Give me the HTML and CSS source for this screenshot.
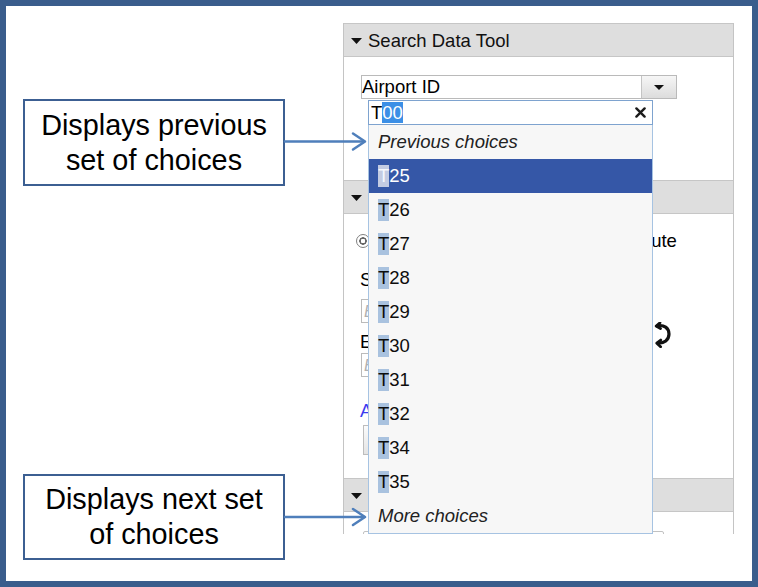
FILE: index.html
```html
<!DOCTYPE html>
<html lang="en">
<head>
<meta charset="utf-8">
<title>Search Data Tool – choices</title>
<link rel="stylesheet" href="styles.css">
</head>
<body>
<div class="frame">
  <section class="panel">
    <div class="hdr"><svg class="tri" width="11" height="6" viewBox="0 0 11 6"><polygon points="0,0 11,0 5.5,6" fill="#111"/></svg><span>Search Data Tool</span></div>
    <div class="body b1">
      <div class="select">
        <span class="select-val">Airport ID</span>
        <span class="select-btn"><svg width="10" height="5" viewBox="0 0 10 5"><polygon points="0,0 10,0 5,5" fill="#111"/></svg></span>
      </div>
    </div>
    <div class="hdr"><svg class="tri" width="11" height="6" viewBox="0 0 11 6"><polygon points="0,0 11,0 5.5,6" fill="#111"/></svg><span>Route Tool</span></div>
    <div class="body b2">
      <div class="radios">
        <span class="radio on"></span><span class="rtext">Airport</span>
        <span class="radio r2"></span><span class="rtext">Route</span>
      </div>
      <div class="od">
        <div class="od-fields">
          <div class="lbl">Start Airport</div>
          <div class="inp"><span class="ph">Enter airport</span></div>
          <div class="lbl lbl2">End Airport</div>
          <div class="inp inp2"><span class="ph">Enter airport</span></div>
        </div>
        <svg class="swap" width="20" height="26" viewBox="0 0 20 26">
          <path d="M4 4 C11 2.5 16 6 16 12 C16 18 11 21.5 5 21" fill="none" stroke="#111" stroke-width="3.2" stroke-linecap="round"/>
          <path d="M7 0.8 L3.2 4 L7.5 6.6" fill="none" stroke="#111" stroke-width="2.8" stroke-linecap="round" stroke-linejoin="round"/>
          <path d="M7.8 18 L3.8 21.2 L7.6 24.8" fill="none" stroke="#111" stroke-width="2.8" stroke-linecap="round" stroke-linejoin="round"/>
        </svg>
      </div>
      <div class="link">Advanced options</div>
      <div class="btn">Find Route</div>
    </div>
    <div class="hdr"><svg class="tri" width="11" height="6" viewBox="0 0 11 6"><polygon points="0,0 11,0 5.5,6" fill="#111"/></svg><span>Results</span></div>
    <div class="body b3">
      <div class="wide"></div>
    </div>
  </section>

  <div class="combo">
    <div class="combo-input">
      <span class="typed">T</span><span class="sel">00</span>
      <svg class="clear" width="11" height="11" viewBox="0 0 11 11"><path d="M1.4 1.4 L9.6 9.6 M9.6 1.4 L1.4 9.6" stroke="#1b1b1b" stroke-width="2.4" stroke-linecap="round"/></svg>
    </div>
    <ul class="list">
      <li class="row nav">Previous choices</li>
      <li class="row active"><span class="hl">T</span>25</li>
      <li class="row"><span class="hl">T</span>26</li>
      <li class="row"><span class="hl">T</span>27</li>
      <li class="row"><span class="hl">T</span>28</li>
      <li class="row"><span class="hl">T</span>29</li>
      <li class="row"><span class="hl">T</span>30</li>
      <li class="row"><span class="hl">T</span>31</li>
      <li class="row"><span class="hl">T</span>32</li>
      <li class="row"><span class="hl">T</span>34</li>
      <li class="row"><span class="hl">T</span>35</li>
      <li class="row nav">More choices</li>
    </ul>
  </div>

  <div class="callout c1">Displays previous<br>set of choices</div>
  <div class="callout c2">Displays next set<br>of choices</div>

  <svg class="arrows" width="746" height="575" viewBox="0 0 746 575">
    <g fill="none" stroke="#4f7fbb" stroke-width="2.5" stroke-linecap="round" stroke-linejoin="round">
      <line x1="279" y1="135.5" x2="358" y2="135.5"/>
      <polyline points="347,127.5 359,135.5 347,143.5"/>
      <line x1="279" y1="511" x2="358" y2="511"/>
      <polyline points="347,503 359,511 347,519"/>
    </g>
  </svg>
</div>
</body>
</html>
```

FILE: styles.css
```css
* {
  box-sizing: border-box;
  margin: 0;
  padding: 0;
}

html,
body {
  width: 758px;
  height: 587px;
  overflow: hidden;
  background: #fff;
}

body {
  font-family: "Liberation Sans", Arial, sans-serif;
}

.frame {
  position: relative;
  width: 758px;
  height: 587px;
  border: 6px solid #3a5d8c;
  background: #fff;
}

/* ---------- panel (background UI) ---------- */
.panel {
  margin: 17px 0 0 337px;
  width: 391px;
  height: 511px;
  overflow: hidden;
  border-left: 1px solid #c4c4c4;
  border-right: 1px solid #c4c4c4;
  font-size: 18.5px;
  color: #000;
}

.hdr {
  display: flex;
  align-items: center;
  gap: 6px;
  height: 34px;
  padding: 1px 0 0 7px;
  background: #dedede;
  border-top: 1px solid #c6c6c6;
  border-bottom: 1px solid #c6c6c6;
  color: #111;
  line-height: 31px;
}

.tri {
  flex: none;
}

.body {
  background: #fff;
}

.b1 {
  height: 123px;
  padding: 18px 0 0 17px;
}

.select {
  display: flex;
  width: 316px;
  height: 24px;
  border: 1px solid #bababa;
  background: #fff;
}

.select-val {
  flex: 1;
  line-height: 22px;
}

.select-btn {
  display: flex;
  align-items: center;
  justify-content: center;
  width: 35px;
  border-left: 1px solid #c4c4c4;
  background: linear-gradient(#f6f6f6, #dcdcdc);
}

.b2 {
  height: 264px;
  padding-top: 16px;
}

.radios {
  display: flex;
  align-items: center;
  height: 22px;
  padding-left: 12px;
}

.radio {
  flex: none;
  width: 14px;
  height: 14px;
  border: 1px solid #808080;
  border-radius: 50%;
  background: #fff;
}

.radio.on {
  background: radial-gradient(circle, #fff 0 2px, #666 2.5px 3.5px, #fff 4px);
}

.radio.r2 {
  margin-left: 181px;
}

.rtext {
  margin-left: 4px;
  line-height: 22px;
}

.od {
  display: flex;
  gap: 13px;
  margin-top: 17px;
  padding-left: 16px;
}

.od-fields {
  width: 280px;
}

.lbl {
  line-height: 22px;
}

.lbl2 {
  margin-top: 8px;
}

.inp {
  margin: 8px 0 0 1px;
  width: 270px;
  height: 24px;
  border: 1px solid #bbbbbb;
  padding-left: 2px;
  line-height: 22px;
}

.inp2 {
  margin-top: 0;
}

.ph {
  color: #b0b0b0;
  font-style: italic;
  font-size: 16px;
}

.swap {
  flex: none;
  margin-top: 53px;
}

.link {
  margin-top: 23px;
  padding-left: 16px;
  line-height: 22px;
  color: #3b3bef;
}

.btn {
  margin: 3px 0 0 19px;
  width: 150px;
  height: 30px;
  border: 1px solid #bdbdbd;
  background: linear-gradient(#fbfbfb, #e4e4e4);
  line-height: 28px;
  text-align: center;
}

.b3 {
  padding-top: 19px;
}

.wide {
  margin-left: 19px;
  width: 301px;
  height: 26px;
  border: 1px solid #c2c2c2;
  border-radius: 2px;
}

/* ---------- combo popup ---------- */
.combo {
  position: absolute;
  left: 362px;
  top: 94px;
  width: 285px;
  font-size: 18.5px;
  color: #000;
}

.combo-input {
  display: flex;
  align-items: center;
  height: 25px;
  padding: 0 6px 0 2px;
  border: 1px solid #7ea3cf;
  background: #fff;
  line-height: 21px;
}

.sel {
  background: #3b8fe6;
  color: #fff;
}

.clear {
  margin-left: auto;
}

.list {
  list-style: none;
  background: #f7f7f7;
  border: 1px solid #a6c3e2;
  border-top: 0;
}

.row {
  display: flex;
  align-items: center;
  height: 34px;
  padding-left: 9px;
  color: #0d0d0d;
}

.row .hl {
  background: #a9c2df;
}

.row.active {
  background: #3557a7;
  color: #fff;
}

.row.active .hl {
  background: #c3cbe2;
  color: #f5f7fc;
}

.row.nav {
  font-style: italic;
  color: #222;
}

/* ---------- callouts ---------- */
.callout {
  position: absolute;
  left: 17px;
  width: 262px;
  border: 2px solid #3c5f92;
  background: #fff;
  font-size: 28.8px;
  line-height: 35px;
  text-align: center;
  color: #000;
}

.c1 {
  top: 93px;
  height: 87px;
  padding-top: 7px;
}

.c2 {
  top: 468px;
  height: 86px;
  padding-top: 6px;
}

.arrows {
  position: absolute;
  left: 0;
  top: 0;
  pointer-events: none;
}
```
